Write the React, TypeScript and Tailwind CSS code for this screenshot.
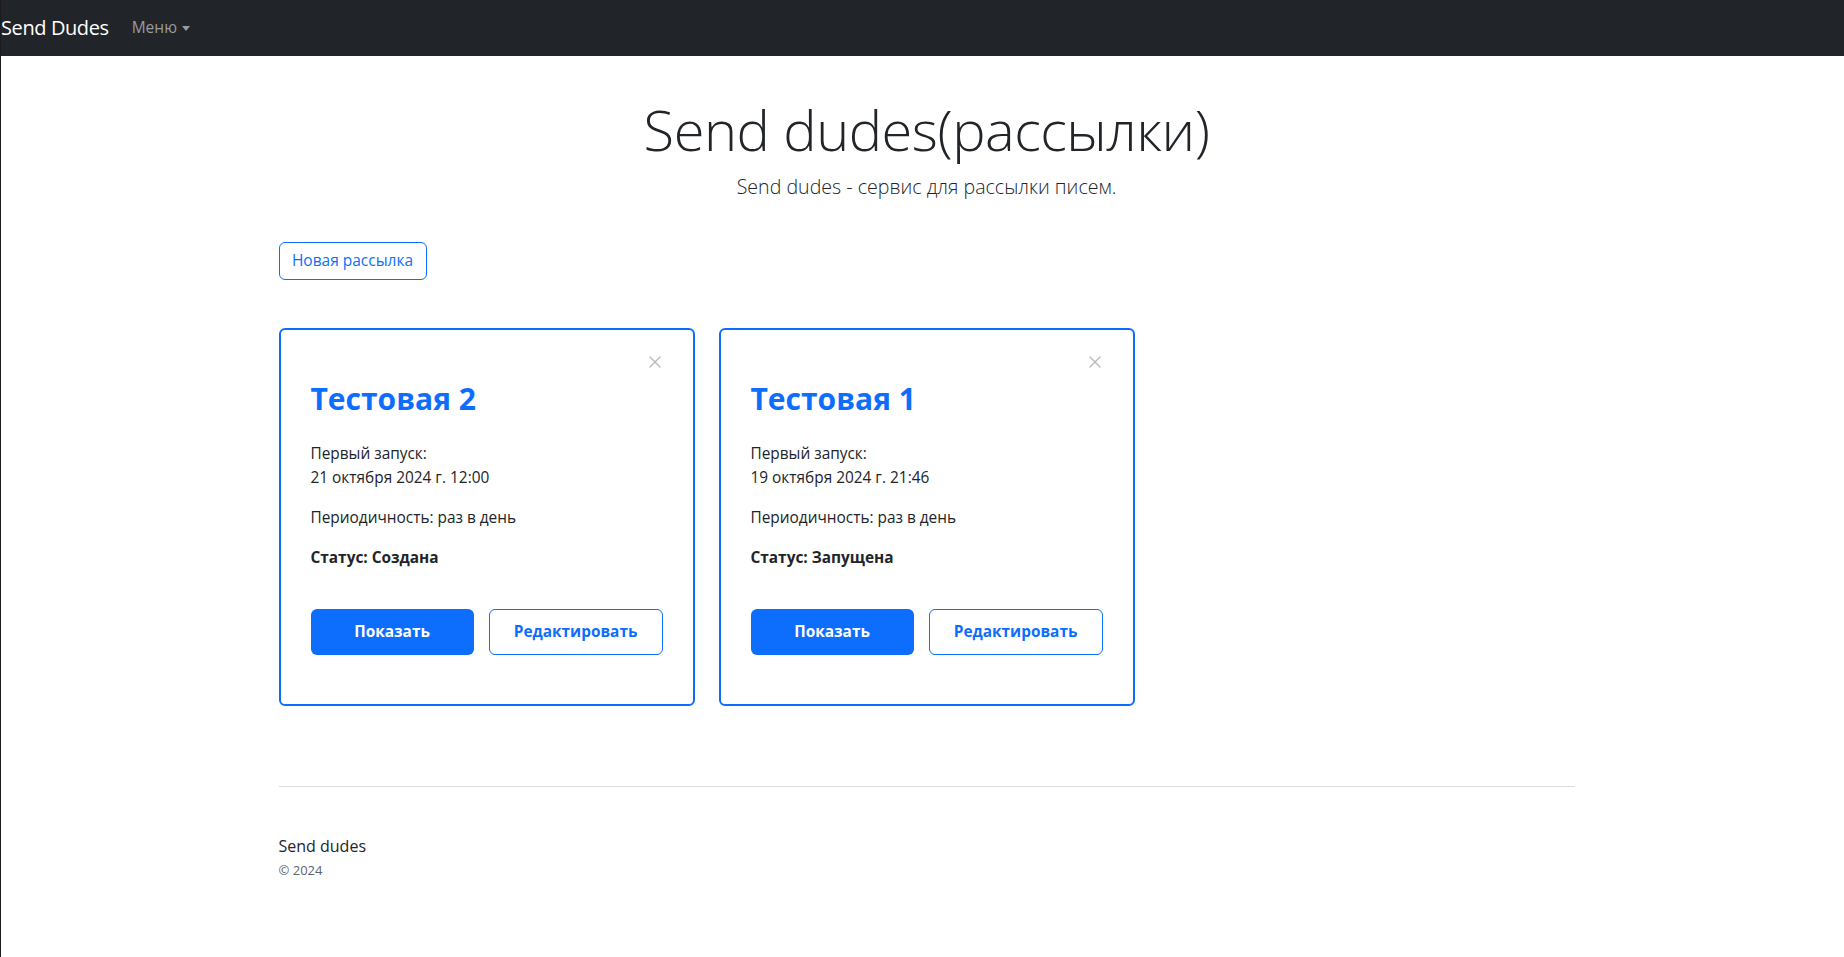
import { X } from "lucide-react";

type Mailing = {
  title: string;
  firstRun: string;
  period: string;
  status: string;
};

const mailings: Mailing[] = [
  { title: "Тестовая 2", firstRun: "21 октября 2024 г. 12:00", period: "раз в день", status: "Создана" },
  { title: "Тестовая 1", firstRun: "19 октября 2024 г. 21:46", period: "раз в день", status: "Запущена" },
];

function MailingCard({ m }: { m: Mailing }) {
  return (
    <div className="w-[416px] h-[378px] border-2 border-[#0d6efd] rounded-[6px] pt-[22px] px-[30px] flex flex-col">
      <div className="flex justify-end h-[18px]">
        <button className="text-[#b9bcbf] mr-[-2px]">
          <X size={20} strokeWidth={1.7} />
        </button>
      </div>
      <h2 className="text-[30px] font-bold text-[#0d6efd] leading-[38px] mt-[10px] mb-[24px]">{m.title}</h2>
      <p className="leading-6 text-[15.4px]">
        Первый запуск:
        <br />
        {m.firstRun}
      </p>
      <p className="leading-6 mt-4 text-[15.4px]">Периодичность: {m.period}</p>
      <p className="leading-6 mt-4 font-bold text-[15.4px]">Статус: {m.status}</p>
      <div className="flex gap-[15px] mt-[39px]">
        <button className="w-[166px] h-[46px] rounded-[6px] bg-[#0d6efd] text-white font-bold text-[15.4px]">Показать</button>
        <button className="w-[177px] h-[46px] rounded-[6px] border border-[#0d6efd] text-[#0d6efd] font-bold text-[15.4px]">
          Редактировать
        </button>
      </div>
    </div>
  );
}

export default function App() {
  return (
    <div className="min-h-[957px] bg-white border-l border-[#1c1a1f] text-[#212529] text-[16px] font-['Open_Sans',sans-serif]">
      {/* Navbar */}
      <nav className="h-[56px] bg-[#212529] flex items-center">
        <span className="text-white text-[20px] tracking-[-0.4px]">Send Dudes</span>
        <span className="ml-[23px] text-[#9a9c9e] text-[15.5px] flex items-center gap-[5px]">
          Меню
          <span className="w-0 h-0 border-l-[4px] border-r-[4px] border-t-[5px] border-l-transparent border-r-transparent border-t-[#9a9c9e]" />
        </span>
      </nav>

      <div className="pl-[8px]">
        <main className="mx-auto w-[1296px]">
          {/* Hero */}
          <section className="text-center pt-[37px]">
            <h1 className="text-[56px] font-light leading-[72px] tracking-[-0.5px]">Send dudes(рассылки)</h1>
            <p className="text-[19.6px] font-light mt-[7px] leading-[30px]">Send dudes - сервис для рассылки писем.</p>
          </section>

          <button className="mt-[40px] h-[38px] w-[148px] border border-[#0d6efd] rounded-[6px] text-[#0d6efd] text-[15.5px]">
            Новая рассылка
          </button>

          {/* Cards */}
          <section className="flex gap-[24px] mt-[48px]">
            {mailings.map((m) => (
              <MailingCard key={m.title} m={m} />
            ))}
          </section>

          <hr className="mt-[80px] border-t border-[#dedede]" />

          {/* Footer */}
          <footer className="pt-[47px]">
            <p className="leading-6">Send dudes</p>
            <p className="text-[13px] text-[#5c636a] leading-5 mt-[2px]">© 2024</p>
          </footer>
        </main>
      </div>
    </div>
  );
}
